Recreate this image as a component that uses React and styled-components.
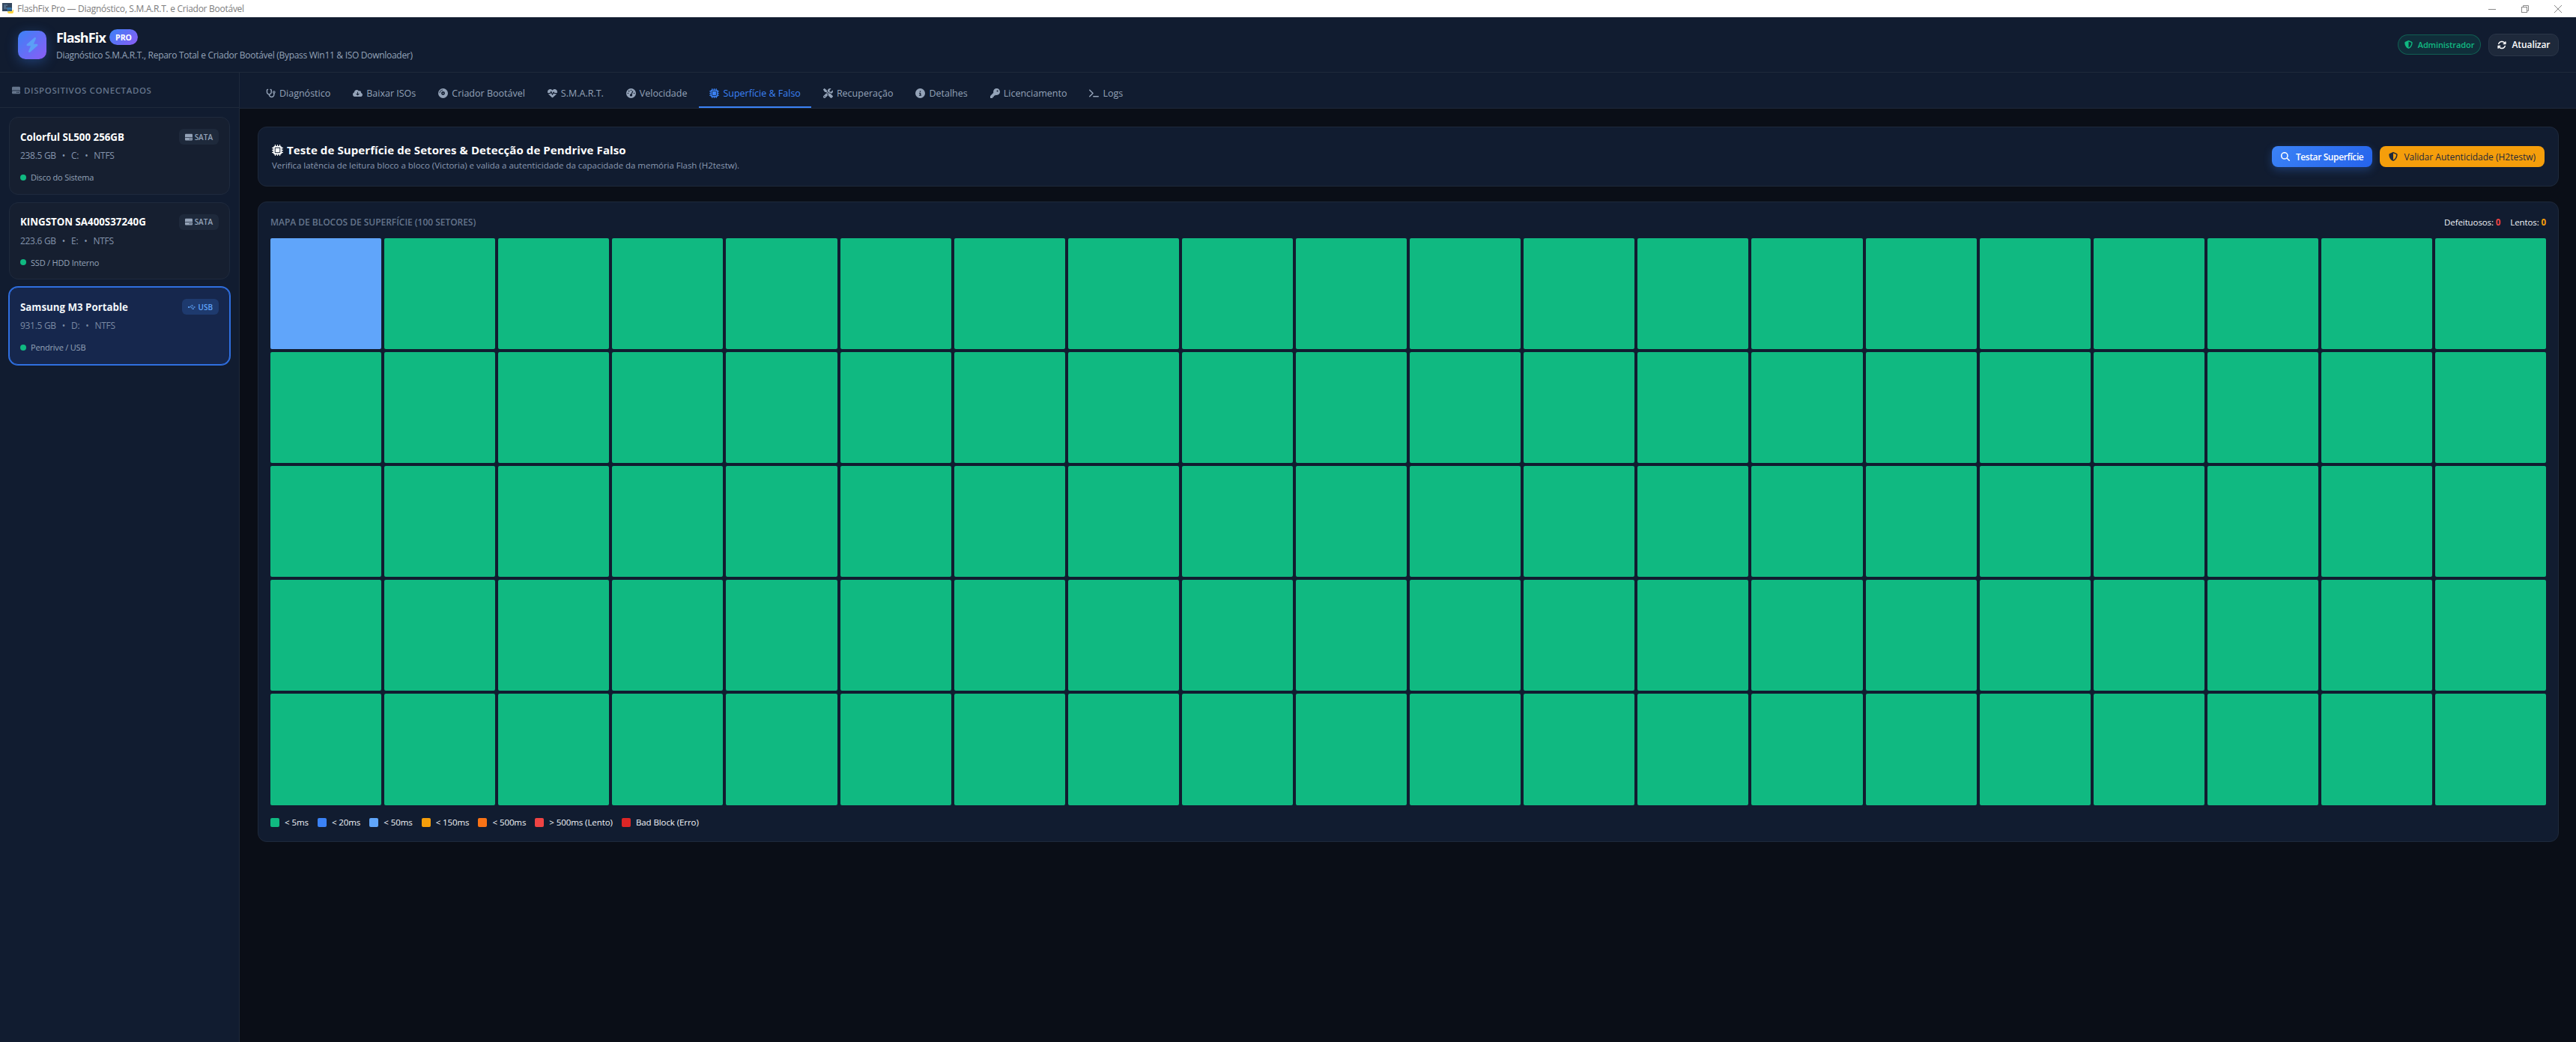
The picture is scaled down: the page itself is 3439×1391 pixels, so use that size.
import React from 'react';
import styled, { createGlobalStyle } from 'styled-components';
import {
  FaStethoscope, FaCloudArrowDown, FaCompactDisc, FaHeartPulse, FaGaugeHigh, FaMicrochip,
  FaScrewdriverWrench, FaCircleInfo, FaKey, FaTerminal, FaHardDrive, FaUsb, FaShieldHalved,
  FaArrowsRotate, FaMagnifyingGlass, FaBolt,
} from 'react-icons/fa6';

const Global = createGlobalStyle`
  html, body { margin: 0; padding: 0; height: 100%; background: #0a0e17; }
  * { box-sizing: border-box; }
  body { font-family: "Open Sans", "Noto Sans", sans-serif; color: #f1f5f9; }
`;

const Win = styled.div`display: flex; flex-direction: column; height: 100vh; overflow: hidden;`;
const TitleBar = styled.div`
  height: 23px; flex: none; background: #fff; display: flex; align-items: center; padding: 0 0 0 3px;
  font-size: 12px; letter-spacing: -0.27px; color: #7c7c7c; gap: 5px;
`;
const TitleText = styled.span`flex: 1;`;
const WinControls = styled.div`display: flex; align-items: center; padding-right: 19px; gap: 34px;`;

const Header = styled.header`
  height: 74px; flex: none; background: #111c30; border-bottom: 1px solid #1e293b;
  display: flex; align-items: center; justify-content: space-between; padding: 0 23px 0 24px;
`;
const Brand = styled.div`display: flex; align-items: center; gap: 13px;`;
const Logo = styled.div`
  width: 38px; height: 38px; border-radius: 10px; display: flex; align-items: center; justify-content: center;
  background: linear-gradient(135deg, #3b82f6, #8b5cf6); color: #5b9ff7; font-size: 20px;
  box-shadow: 0 4px 16px rgba(59,130,246,.35);
`;
const BrandText = styled.div`display: flex; flex-direction: column; gap: 3px;`;
const BrandRow = styled.div`display: flex; align-items: center; gap: 5px; height: 24px;`;
const BrandName = styled.span`font-size: 18px; font-weight: 700; color: #fff; letter-spacing: -0.85px;`;
const ProBadge = styled.span`
  height: 21px; width: 38px; border-radius: 11px; background: linear-gradient(135deg, #3b82f6, #8b5cf6);
  font-size: 10.5px; font-weight: 700; color: #fff; display: flex; align-items: center; justify-content: center;
`;
const Subtitle = styled.div`font-size: 12px; color: #94a3b8; letter-spacing: -0.29px;`;
const HeaderActions = styled.div`display: flex; align-items: center; gap: 10px;`;
const AdminPill = styled.div`
  height: 27px; width: 111px; border-radius: 14px; border: 1px solid rgba(16,185,129,.35); background: rgba(16,185,129,.12);
  color: #10b981; font-size: 11px; font-weight: 600; display: flex; align-items: center; justify-content: center; gap: 7px;
  letter-spacing: -0.1px; svg { font-size: 11px; }
`;
const RefreshBtn = styled.div`
  height: 30px; width: 94px; border-radius: 10px; border: 1px solid #2a3548; background: #1e293b;
  color: #fff; font-size: 12px; font-weight: 600; display: flex; align-items: center; justify-content: center; gap: 8px;
  letter-spacing: -0.1px; svg { font-size: 12px; }
`;

const Body = styled.div`flex: 1; display: flex; min-height: 0;`;
const Sidebar = styled.aside`width: 320px; flex: none; background: #111c30; border-right: 1px solid #1e293b;`;
const SideHead = styled.div`
  height: 47px; border-bottom: 1px solid #1e293b; display: flex; align-items: center; gap: 5px; padding: 0 16px;
  font-size: 11.5px; font-weight: 600; color: #64748b; letter-spacing: .6px; text-transform: uppercase;
  svg { font-size: 11px; }
`;
const DeviceList = styled.div`display: flex; flex-direction: column; gap: 10px; padding: 12px 12px;`;
const Card = styled.div`
  height: 103.5px; border-radius: 12px; padding: 15px 14px; display: flex; flex-direction: column;
  background: ${p => p.$active ? '#16274d' : '#161f30'};
  border: 1px solid ${p => p.$active ? '#2f6fe0' : '#1f2a3d'};
  box-shadow: ${p => p.$active ? '0 0 0 1px #2f6fe0' : 'none'};
`;
const CardTop = styled.div`display: flex; justify-content: space-between; align-items: center; height: 21px;`;
const CardName = styled.div`font-size: 13.3px; font-weight: 700; color: ${p => p.$active ? '#f1f5f9' : '#fff'};`;
const BusBadge = styled.div`
  height: 21px; padding: 0 8px; border-radius: 6px; display: flex; align-items: center; gap: 3px;
  font-size: 10px; font-weight: 600;
  background: ${p => p.$usb ? '#1e3a6e' : '#1e293b'}; color: ${p => p.$usb ? '#60a5fa' : '#94a3b8'};
`;
const Meta = styled.div`
  margin-top: 6px; font-size: 12px; color: ${p => p.$active ? '#7a8aa3' : '#8595ad'}; letter-spacing: -0.3px;
  display: flex; gap: 8px;
`;
const Status = styled.div`
  margin-top: 13px; display: flex; align-items: center; gap: 6px; font-size: 11px; color: #94a3b8; letter-spacing: -0.2px;
`;
const Dot = styled.span`width: 8px; height: 8px; border-radius: 50%; background: #10b981;`;

const Content = styled.div`flex: 1; min-width: 0; display: flex; flex-direction: column;`;
const TabBar = styled.nav`
  height: 48px; flex: none; background: #111c30; border-bottom: 1px solid #1e293b;
  display: flex; gap: 2px; padding: 0 0 0 21px;
`;
const Tab = styled.div`
  height: 47px; padding: 9px 14px 0; display: flex; align-items: center; gap: 5px; font-size: 12.5px; font-weight: 500;
  color: ${p => p.$active ? '#3b82f6' : '#94a3b8'};
  border-bottom: 2px solid ${p => p.$active ? '#3b82f6' : 'transparent'};
  svg { font-size: 13px; }
`;
const Main = styled.main`flex: 1; display: flex; flex-direction: column; gap: 20px; padding: 24px 23px 24px 24px; background: #0a0e17;`;
const Panel = styled.section`background: #111c30; border: 1px solid #1e293b; border-radius: 12px;`;
const TestPanel = styled(Panel)`
  height: 80px; display: flex; align-items: center; justify-content: space-between; padding: 0 18px;
`;
const TestTitle = styled.h2`
  margin: 0; font-size: 15px; font-weight: 700; color: #fff; letter-spacing: .1px; display: flex; align-items: center; gap: 5px;
  svg { font-size: 15px; }
`;
const TestSub = styled.p`margin: 3px 0 0; font-size: 11.5px; color: #8a99b0; letter-spacing: -0.03px;`;
const BtnRow = styled.div`display: flex; gap: 10px;`;
const Btn = styled.div`
  height: 28px; padding: 0 12px; border-radius: 8px; display: flex; align-items: center; gap: 8px; font-size: 12px;
  font-weight: ${p => p.$amber ? 500 : 600};
  letter-spacing: ${p => p.$amber ? '0' : '-0.4px'}; svg { font-size: 12px; }
  background: ${p => p.$amber ? '#f59e0b' : 'linear-gradient(135deg, #3b82f6, #2563eb)'};
  color: ${p => p.$amber ? '#1e293b' : '#fff'};
  box-shadow: ${p => p.$amber ? 'none' : '0 4px 12px rgba(59,130,246,.3)'};
`;
const MapPanel = styled(Panel)`padding: 0 16px 19px;`;
const MapHead = styled.div`display: flex; justify-content: space-between; align-items: center; height: 48px; padding-top: 4px;`;
const MapTitle = styled.div`font-size: 12px; font-weight: 600; color: #64748b; letter-spacing: -0.03px; text-transform: uppercase;`;
const Counts = styled.div`display: flex; gap: 13px; font-size: 11.5px; color: #f1f5f9; letter-spacing: -0.1px;`;
const Num = styled.b`color: ${p => p.$c}; font-weight: 700;`;
const Grid = styled.div`display: grid; grid-template-columns: repeat(20, 1fr); gap: 4px;`;
const Block = styled.div`aspect-ratio: 1; border-radius: 2px; background: ${p => p.$c};`;
const Legend = styled.div`display: flex; gap: 12px; margin-top: 17px;`;
const LegendItem = styled.div`display: flex; align-items: center; gap: 7px; font-size: 11.5px; color: #f1f5f9; letter-spacing: -0.08px; height: 12px;`;
const Swatch = styled.span`width: 12px; height: 12px; border-radius: 2px; background: ${p => p.$c};`;

const PyIcon = () => (
  <svg width="15" height="16" viewBox="0 0 15 16">
    <rect x="0" y="0" width="13" height="11" fill="#33475e" />
    <path d="M2 3h5M2 5h3M2 7h6" stroke="#6f8fb0" />
    <path d="M7 6h4a2 2 0 0 1 2 2v1H8v1h5v1H9a2 2 0 0 0-2 2V9a2 2 0 0 1 0-3z" fill="#3776ab" />
    <path d="M8 11h5a2 2 0 0 0 1-2h1v3a2 2 0 0 1-2 2H9a2 2 0 0 1-2-2z" fill="#ffd43b" />
  </svg>
);

const tabs = [
  [FaStethoscope, 'Diagnóstico'], [FaCloudArrowDown, 'Baixar ISOs'], [FaCompactDisc, 'Criador Bootável'],
  [FaHeartPulse, 'S.M.A.R.T.'], [FaGaugeHigh, 'Velocidade'], [FaMicrochip, 'Superfície & Falso', true],
  [FaScrewdriverWrench, 'Recuperação'], [FaCircleInfo, 'Detalhes'], [FaKey, 'Licenciamento'], [FaTerminal, 'Logs'],
];
const devices = [
  { name: 'Colorful SL500 256GB', bus: 'SATA', size: '238.5 GB', drive: 'C:', type: 'Disco do Sistema' },
  { name: 'KINGSTON SA400S37240G', bus: 'SATA', size: '223.6 GB', drive: 'E:', type: 'SSD / HDD Interno' },
  { name: 'Samsung M3 Portable', bus: 'USB', size: '931.5 GB', drive: 'D:', type: 'Pendrive / USB', active: true },
];
const legend = [
  ['#10b981', '< 5ms'], ['#3b82f6', '< 20ms'], ['#60a5fa', '< 50ms'], ['#f59e0b', '< 150ms'],
  ['#f97316', '< 500ms'], ['#ef4444', '> 500ms (Lento)'], ['#dc2626', 'Bad Block (Erro)'],
];

export default function App() {
  return (
    <Win>
      <Global />
      <TitleBar>
        <PyIcon />
        <TitleText>FlashFix Pro — Diagnóstico, S.M.A.R.T. e Criador Bootável</TitleText>
        <WinControls>
          <svg width="10" height="10" viewBox="0 0 10 10"><path d="M0 5.5h10" stroke="#888" /></svg>
          <svg width="10" height="10" viewBox="0 0 10 10" fill="none" stroke="#888"><rect x=".5" y="2.5" width="7" height="7" /><path d="M2.5 2.5v-2h7v7h-2" /></svg>
          <svg width="10" height="10" viewBox="0 0 10 10" stroke="#888"><path d="M0 0l10 10M10 0L0 10" /></svg>
        </WinControls>
      </TitleBar>
      <Header>
        <Brand>
          <Logo><FaBolt /></Logo>
          <BrandText>
            <BrandRow><BrandName>FlashFix</BrandName><ProBadge>PRO</ProBadge></BrandRow>
            <Subtitle>Diagnóstico S.M.A.R.T., Reparo Total e Criador Bootável (Bypass Win11 &amp; ISO Downloader)</Subtitle>
          </BrandText>
        </Brand>
        <HeaderActions>
          <AdminPill><FaShieldHalved />Administrador</AdminPill>
          <RefreshBtn><FaArrowsRotate />Atualizar</RefreshBtn>
        </HeaderActions>
      </Header>
      <Body>
        <Sidebar>
          <SideHead><FaHardDrive />Dispositivos Conectados</SideHead>
          <DeviceList>
            {devices.map(d => (
              <Card key={d.name} $active={d.active}>
                <CardTop>
                  <CardName $active={d.active}>{d.name}</CardName>
                  <BusBadge $usb={d.bus === 'USB'}>{d.bus === 'USB' ? <FaUsb /> : <FaHardDrive />}{d.bus}</BusBadge>
                </CardTop>
                <Meta $active={d.active}><span>{d.size}</span><span>•</span><span>{d.drive}</span><span>•</span><span>NTFS</span></Meta>
                <Status><Dot />{d.type}</Status>
              </Card>
            ))}
          </DeviceList>
        </Sidebar>
        <Content>
          <TabBar>
            {tabs.map(([I, label, active]) => <Tab key={label} $active={active}><I />{label}</Tab>)}
          </TabBar>
          <Main>
            <TestPanel>
              <div>
                <TestTitle><FaMicrochip />Teste de Superfície de Setores &amp; Detecção de Pendrive Falso</TestTitle>
                <TestSub>Verifica latência de leitura bloco a bloco (Victoria) e valida a autenticidade da capacidade da memória Flash (H2testw).</TestSub>
              </div>
              <BtnRow>
                <Btn><FaMagnifyingGlass />Testar Superfície</Btn>
                <Btn $amber><FaShieldHalved />Validar Autenticidade (H2testw)</Btn>
              </BtnRow>
            </TestPanel>
            <MapPanel>
              <MapHead>
                <MapTitle>Mapa de Blocos de Superfície (100 Setores)</MapTitle>
                <Counts>
                  <span>Defeituosos: <Num $c="#ef4444">0</Num></span>
                  <span>Lentos: <Num $c="#f59e0b">0</Num></span>
                </Counts>
              </MapHead>
              <Grid>
                {Array.from({ length: 100 }, (_, i) => <Block key={i} $c={i === 0 ? '#60a5fa' : '#10b981'} />)}
              </Grid>
              <Legend>
                {legend.map(([c, t]) => <LegendItem key={t}><Swatch $c={c} />{t}</LegendItem>)}
              </Legend>
            </MapPanel>
          </Main>
        </Content>
      </Body>
    </Win>
  );
}
